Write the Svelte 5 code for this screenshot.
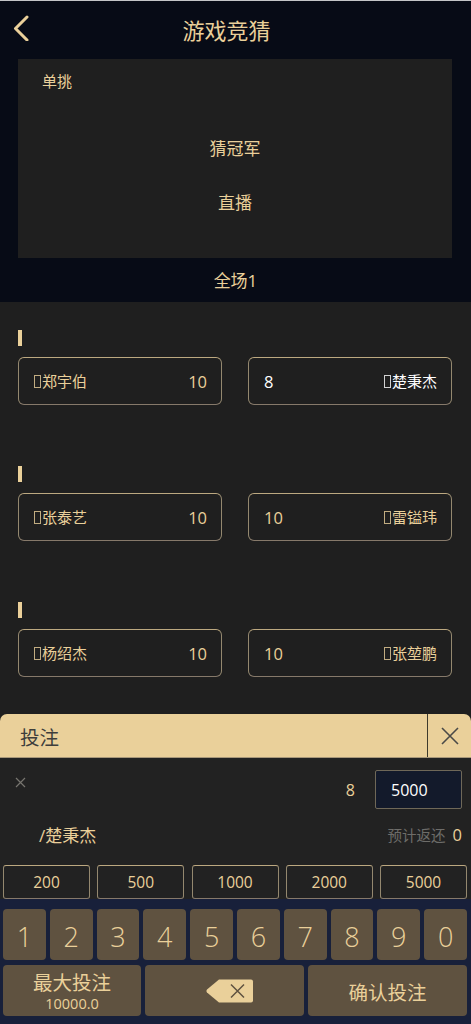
<script>
  const matches = [
    { home: '郑宇伯', homeOdds: '10', awayOdds: '8', away: '楚秉杰', picked: true },
    { home: '张泰艺', homeOdds: '10', awayOdds: '10', away: '雷镒玮' },
    { home: '杨绍杰', homeOdds: '10', awayOdds: '10', away: '张堃鹏' }
  ];
  const chips = ['200', '500', '1000', '2000', '5000'];
  const digits = ['1', '2', '3', '4', '5', '6', '7', '8', '9', '0'];
</script>

<div class="page">
  <header class="top">
    <div class="title-bar">
      <svg class="back" width="16" height="26" viewBox="0 0 16 26">
        <path d="M14 2 L2.500 13.500 L14 25" fill="none" stroke="#ead09a" stroke-width="3" stroke-linecap="round" stroke-linejoin="round"/>
      </svg>
      <h1>游戏竞猜</h1>
    </div>
    <div class="stage">
      <div class="kind">单挑</div>
      <div class="stage-line first">猜冠军</div>
      <div class="stage-line second">直播</div>
    </div>
    <div class="round">全场1</div>
  </header>

  <main class="list">
    {#each matches as m}
      <section class="group">
        <div class="mark"></div>
        <div class="pair">
          <div class="pick">
            <span class="name"><i class="tofu"></i>{m.home}</span>
            <span class="odds">{m.homeOdds}</span>
          </div>
          <div class="pick" class:picked={m.picked}>
            <span class="odds">{m.awayOdds}</span>
            <span class="name"><i class="tofu"></i>{m.away}</span>
          </div>
        </div>
      </section>
    {/each}
  </main>

  <section class="slip">
    <div class="slip-head">
      <div class="slip-title">投注</div>
      <div class="slip-close">
        <svg width="18" height="18" viewBox="0 0 18 18">
          <path d="M1 1 L17 17 M17 1 L1 17" stroke="#4a4a48" stroke-width="1.6"/>
        </svg>
      </div>
    </div>
    <div class="slip-body">
      <div class="row-one">
        <svg class="remove" width="11" height="11" viewBox="0 0 11 11">
          <path d="M1 1 L10 10 M10 1 L1 10" stroke="#77756f" stroke-width="1.2"/>
        </svg>
        <span class="slip-odds">8</span>
        <div class="amount">5000</div>
      </div>
      <div class="row-two">
        <span class="slip-name">/楚秉杰</span>
        <span class="payout"><span class="payout-label">预计返还</span><span class="payout-value">0</span></span>
      </div>
      <div class="chips">
        {#each chips as c}
          <div class="chip">{c}</div>
        {/each}
      </div>
    </div>
    <div class="keypad">
      <div class="digits">
        {#each digits as d}
          <div class="key digit">{d}</div>
        {/each}
      </div>
      <div class="actions">
        <div class="key max">
          <span class="max-label">最大投注</span>
          <span class="max-value">10000.0</span>
        </div>
        <div class="key del">
          <svg width="48" height="24" viewBox="0 0 48 24">
            <path d="M13 0.500 H45 a2 2 0 0 1 2 2 V21.500 a2 2 0 0 1 -2 2 H13 L1 13.500 a2.500 2.500 0 0 1 0 -3 Z" fill="#ead09a"/>
            <path d="M25 5.500 L38 18.500 M38 5.500 L25 18.500" stroke="#5f5240" stroke-width="1.500"/>
          </svg>
        </div>
        <div class="key confirm">确认投注</div>
      </div>
    </div>
  </section>
</div>

<style>
  :global(body) {
    margin: 0;
    background: #1f1f1f;
  }
  .page {
    width: 471px;
    height: 1024px;
    overflow: hidden;
    position: relative;
    background: #1f1f1f;
    color: #ead09a;
    font-family: "Open Sans", "Noto Sans CJK SC", sans-serif;
  }
  .top {
    height: 301px;
    background: #070b16;
    border-top: 1px solid #c4c5c7;
  }
  .title-bar {
    height: 58px;
    position: relative;
    display: flex;
    justify-content: center;
    align-items: center;
  }
  .back {
    position: absolute;
    left: 13px;
    top: 14px;
  }
  h1 {
    margin: 0 18px 0 0;
    font-size: 22px;
    font-weight: 400;
    line-height: 58px;
  }
  .stage {
    height: 199px;
    margin: 0 19px 0 18px;
    background: #1f1f1f;
    font-size: 17px;
    text-align: center;
  }
  .kind {
    padding: 11px 0 0 24px;
    text-align: left;
    font-size: 15px;
    line-height: 22px;
  }
  .stage-line {
    line-height: 24px;
  }
  .stage-line.first {
    margin-top: 45px;
  }
  .stage-line.second {
    margin-top: 30px;
  }
  .round {
    font-size: 17px;
    line-height: 24px;
    text-align: center;
    margin-top: 11px;
  }
  .list {
    display: block;
  }
  .group {
    padding: 28px 19px 0 18px;
    height: 108px;
  }
  .mark {
    width: 4px;
    height: 16px;
    background: #ead09a;
  }
  .pair {
    display: flex;
    justify-content: space-between;
    margin-top: 11px;
  }
  .pick {
    width: 204px;
    height: 48px;
    box-sizing: border-box;
    padding: 0 14px 0 15px;
    display: flex;
    justify-content: space-between;
    align-items: center;
    border: 1px solid #94886f;
    border-top-color: #bca880;
    border-bottom-color: #86796a;
    border-radius: 6px;
  }
  .pick.picked {
    color: #fff;
  }
  .name {
    font-size: 15px;
    line-height: 20px;
    display: flex;
    align-items: center;
  }
  .tofu {
    display: inline-block;
    box-sizing: border-box;
    width: 7px;
    height: 13px;
    margin-right: 1px;
    border: 1px solid currentColor;
    opacity: 0.8;
  }
  .odds {
    font-size: 16.500px;
    margin-top: 1px;
  }
  .slip {
    position: absolute;
    left: 0;
    right: 0;
    top: 714px;
    bottom: 0;
    background: #222;
    border-radius: 7px 7px 0 0;
    overflow: hidden;
  }
  .slip-head {
    height: 44px;
    display: flex;
    background: #ead09a;
    border-bottom: 1px solid #a8987a;
    box-sizing: border-box;
  }
  .slip-title {
    flex: 1;
    padding-left: 20px;
    font-size: 19.500px;
    line-height: 47px;
    color: #3e3e3c;
  }
  .slip-close {
    width: 43px;
    border-left: 1px solid #3e3a2c;
    display: flex;
    justify-content: center;
    align-items: center;
    padding-top: 1px;
  }
  .slip-body {
    height: 141px;
  }
  .row-one {
    display: flex;
    align-items: flex-start;
    height: 38px;
    padding: 12px 9px 0 15px;
  }
  .remove {
    margin-top: 7px;
  }
  .slip-odds {
    margin-left: auto;
    margin-right: 20px;
    margin-top: 9px;
    font-size: 16px;
    line-height: 22px;
  }
  .amount {
    width: 87px;
    height: 39px;
    box-sizing: border-box;
    border: 1px solid #6f6858;
    border-radius: 2px;
    background: #131a2b;
    color: #fff;
    font-size: 16px;
    line-height: 38px;
    padding-left: 15px;
  }
  .row-two {
    display: flex;
    justify-content: space-between;
    align-items: center;
    padding: 3px 9px 0 39px;
    height: 22px;
    margin-top: 12px;
  }
  .slip-name {
    font-size: 17px;
  }
  .payout {
    display: flex;
    align-items: center;
    gap: 7px;
  }
  .payout-label {
    font-size: 14.500px;
    color: #6d6c69;
  }
  .payout-value {
    font-size: 16.500px;
  }
  .chips {
    display: flex;
    justify-content: space-between;
    padding: 0 4px 0 3px;
    margin-top: 20px;
  }
  .chip {
    width: 87px;
    height: 34px;
    box-sizing: border-box;
    border: 1px solid #94886f;
    border-top-color: #bca880;
    border-bottom-color: #86796a;
    border-radius: 3px;
    text-align: center;
    font-size: 15.500px;
    line-height: 33px;
  }
  .keypad {
    height: 125px;
    box-sizing: border-box;
    background: #18203a;
    padding: 10px 4px 0 3px;
    display: flex;
    flex-direction: column;
    gap: 5px;
  }
  .digits {
    display: grid;
    grid-template-columns: repeat(10, 1fr);
    gap: 4px;
  }
  .actions {
    display: grid;
    grid-template-columns: 138px 159px 1fr;
    gap: 4px;
  }
  .key {
    height: 51px;
    box-sizing: border-box;
    background: #5f5240;
    border-radius: 4px;
    display: flex;
    justify-content: center;
    align-items: center;
  }
  .digit {
    font-size: 27px;
    font-weight: 300;
    padding-top: 3px;
  }
  .max {
    flex-direction: column;
    line-height: 1;
    padding-top: 3px;
  }
  .max-label {
    font-size: 19.500px;
    line-height: 24px;
  }
  .max-value {
    font-size: 14.500px;
    line-height: 18px;
  }
  .del svg {
    margin-left: 10px;
  }
  .confirm {
    font-size: 19.500px;
    padding-top: 2px;
  }
</style>
